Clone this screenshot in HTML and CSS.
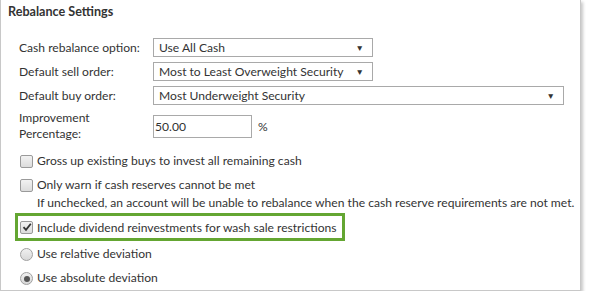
FILE: index.html
```html
<!DOCTYPE html>
<html>
<head>
<meta charset="utf-8">
<link rel="stylesheet" href="styles.css">
</head>
<body>
<div class="panel">
  <div class="title">Rebalance Settings</div>
  <div class="form">
    <div class="row">
      <span class="label">Cash rebalance option:</span>
      <div class="select sel-short"><span>Use All Cash</span><span class="arrow">▼</span></div>
    </div>
    <div class="row">
      <span class="label">Default sell order:</span>
      <div class="select sel-short"><span>Most to Least Overweight Security</span><span class="arrow">▼</span></div>
    </div>
    <div class="row">
      <span class="label">Default buy order:</span>
      <div class="select sel-long"><span>Most Underweight Security</span><span class="arrow">▼</span></div>
    </div>
    <div class="row row-impr">
      <span class="label label-2">Improvement<br>Percentage:</span>
      <div class="pct"><div class="input">50.00</div><span class="pct-sign">%</span></div>
    </div>
  </div>
  <div class="options">
    <div class="opt">
      <span class="cb"></span>
      <span class="opt-text">Gross up existing buys to invest all remaining cash</span>
    </div>
    <div class="opt opt-2">
      <span class="cb"></span>
      <div class="opt-text">Only warn if cash reserves cannot be met<br>If unchecked, an account will be unable to rebalance when the cash reserve requirements are not met.</div>
    </div>
    <div class="highlight">
      <span class="cb checked"><svg width="10" height="10" viewBox="0 0 10 10"><path d="M1.5 5.2 L4 7.8 L8.8 1.8" fill="none" stroke="#333" stroke-width="1.8"/></svg></span>
      <span class="opt-text">Include dividend reinvestments for wash sale restrictions</span>
    </div>
    <div class="opt radio-row">
      <span class="radio"></span>
      <span class="opt-text">Use relative deviation</span>
    </div>
    <div class="opt radio-row r2">
      <span class="radio on"><span class="dot"></span></span>
      <span class="opt-text">Use absolute deviation</span>
    </div>
  </div>
</div>
</body>
</html>
```
FILE: styles.css
```css
html, body {
  margin: 0;
  padding: 0;
  background: #fff;
}
body {
  font-family: Lato, "Open Sans", sans-serif;
  font-size: 12.1px;
  color: #333;
  white-space: nowrap;
}
.panel {
  width: 581px;
  height: 291px;
  box-sizing: border-box;
  border: 1px solid #c8c8c8;
  border-top: none;
  box-shadow: 2px 2px 3px rgba(0,0,0,0.22);
  margin-left: 0;
  padding-left: 1px;
}
.title {
  font-weight: bold;
  font-size: 12.6px;
  padding: 4px 0 0 6px;
  height: 38px;
  box-sizing: border-box;
  color: #333;
}
.form {
  padding-left: 17px;
  display: flex;
  flex-direction: column;
  gap: 5px;
}
.row {
  display: flex;
  align-items: center;
  height: 19px;
}
.label {
  width: 134px;
  flex: none;
}
.select {
  height: 19px;
  box-sizing: border-box;
  border: 1px solid #a9a9a9;
  display: flex;
  align-items: center;
  justify-content: space-between;
  padding: 0 8px 0 5px;
  background: #fff;
}
.sel-short { width: 220px; }
.sel-long { width: 411px; }
.arrow {
  font-size: 8.5px;
  color: #333;
}
.row-impr {
  height: 32px;
}
.label-2 {
  line-height: 16px;
}
.pct {
  display: flex;
  align-items: center;
  gap: 6px;
}
.input {
  width: 99px;
  height: 23px;
  box-sizing: border-box;
  border: 1px solid #a9a9a9;
  padding-left: 1px;
  display: flex;
  align-items: center;
}
.options {
  padding-left: 18px;
  margin-top: 10px;
  display: flex;
  flex-direction: column;
}
.opt {
  display: flex;
  align-items: flex-start;
  gap: 4px;
  line-height: 18px;
}
.opt-2 { margin-top: 6px; }
.cb {
  width: 13px;
  height: 13px;
  box-sizing: border-box;
  border: 1px solid #9a9a9a;
  border-radius: 2px;
  background: linear-gradient(#f2f2f2, #dcdcdc);
  flex: none;
  margin-top: 3px;
  display: flex;
  align-items: center;
  justify-content: center;
}
.highlight {
  margin-left: -5px;
  margin-top: 1px;
  width: 330px;
  height: 28px;
  box-sizing: border-box;
  border: 3px solid #64a632;
  display: flex;
  align-items: center;
  gap: 4px;
  padding-left: 2px;
}
.highlight .cb { margin-top: 0; }
.radio-row { margin-top: 4px; }
.r2 { margin-top: 6px; }
.radio {
  width: 13px;
  height: 13px;
  box-sizing: border-box;
  border: 1px solid #a0a0a0;
  border-radius: 50%;
  background: linear-gradient(#f0f0f0, #d8d8d8);
  flex: none;
  margin-top: 3px;
  display: flex;
  align-items: center;
  justify-content: center;
}
.dot {
  width: 6px;
  height: 6px;
  border-radius: 50%;
  background: #555;
}
```
